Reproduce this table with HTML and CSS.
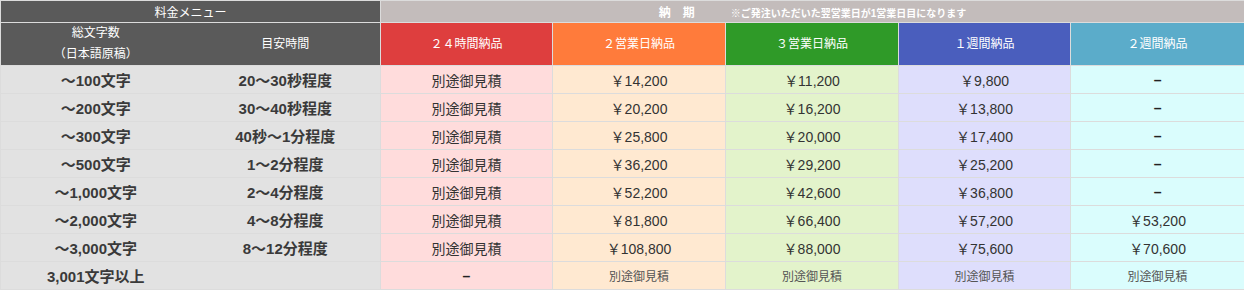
FILE: index.html
```html
<!DOCTYPE html>
<html lang="ja">
<head>
<meta charset="utf-8">
<title>料金メニュー</title>
<link rel="stylesheet" href="styles.css">
</head>
<body>
<table class="price">
  <colgroup>
    <col class="c-len"><col class="c-time">
    <col class="c-d1"><col class="c-d2"><col class="c-d3"><col class="c-d4"><col class="c-d5">
  </colgroup>
  <thead>
    <tr class="h1">
      <th colspan="2" class="dark">料金メニュー</th>
      <th colspan="5" class="grey"><span class="nouki">納　期</span><span class="note">※ご発注いただいた翌営業日が1営業日目になります</span></th>
    </tr>
    <tr class="h2">
      <th class="dark l">総文字数<br>（日本語原稿）</th>
      <th class="dark r">目安時間</th>
      <th class="red">２４時間納品</th>
      <th class="orange">２営業日納品</th>
      <th class="green">３営業日納品</th>
      <th class="blue">１週間納品</th>
      <th class="cyan">２週間納品</th>
    </tr>
  </thead>
  <tbody>
    <tr><td class="l">～100文字</td><td class="r">20～30秒程度</td><td class="p1">別途御見積</td><td class="p2">￥14,200</td><td class="p3">￥11,200</td><td class="p4">￥9,800</td><td class="p5"><span class="dash">–</span></td></tr>
    <tr><td class="l">～200文字</td><td class="r">30～40秒程度</td><td class="p1">別途御見積</td><td class="p2">￥20,200</td><td class="p3">￥16,200</td><td class="p4">￥13,800</td><td class="p5"><span class="dash">–</span></td></tr>
    <tr><td class="l">～300文字</td><td class="r">40秒～1分程度</td><td class="p1">別途御見積</td><td class="p2">￥25,800</td><td class="p3">￥20,000</td><td class="p4">￥17,400</td><td class="p5"><span class="dash">–</span></td></tr>
    <tr><td class="l">～500文字</td><td class="r">1～2分程度</td><td class="p1">別途御見積</td><td class="p2">￥36,200</td><td class="p3">￥29,200</td><td class="p4">￥25,200</td><td class="p5"><span class="dash">–</span></td></tr>
    <tr><td class="l">～1,000文字</td><td class="r">2～4分程度</td><td class="p1">別途御見積</td><td class="p2">￥52,200</td><td class="p3">￥42,600</td><td class="p4">￥36,800</td><td class="p5"><span class="dash">–</span></td></tr>
    <tr><td class="l">～2,000文字</td><td class="r">4～8分程度</td><td class="p1">別途御見積</td><td class="p2">￥81,800</td><td class="p3">￥66,400</td><td class="p4">￥57,200</td><td class="p5">￥53,200</td></tr>
    <tr><td class="l">～3,000文字</td><td class="r">8～12分程度</td><td class="p1">別途御見積</td><td class="p2">￥108,800</td><td class="p3">￥88,000</td><td class="p4">￥75,600</td><td class="p5">￥70,600</td></tr>
    <tr class="last"><td class="l">3,001文字以上</td><td class="r"></td><td class="p1"><span class="dash">–</span></td><td class="p2 sm">別途御見積</td><td class="p3 sm">別途御見積</td><td class="p4 sm">別途御見積</td><td class="p5 sm">別途御見積</td></tr>
  </tbody>
</table>
</body>
</html>
```
FILE: styles.css
```css
html, body {
  margin: 0;
  padding: 0;
  background: #ffffff;
}
body {
  font-family: "Liberation Sans", "Noto Sans CJK JP", sans-serif;
  color: #333333;
}
.price {
  width: 1244px;
  table-layout: fixed;
  border-collapse: collapse;
}
.c-len { width: 190px; }
.c-time { width: 190px; }
.c-d1 { width: 172px; }
.c-d2 { width: 173px; }
.c-d3 { width: 173px; }
.c-d4 { width: 172px; }
.c-d5 { width: 174px; }

.price th, .price td {
  border: 1px solid #dcdcdc;
  padding: 0;
  text-align: center;
  vertical-align: middle;
}
.price th {
  color: #ffffff;
  font-weight: normal;
  font-size: 12px;
}
.h1 th { height: 21px; }
.h2 th { height: 41px; line-height: 21px; }
.price td { height: 27px; font-size: 14px; }

.price .l { border-right: hidden; }
.price .r { border-left: hidden; }

.dark { background: #5a5a5a; }
.grey { background: #c3bcbb; }
.nouki { font-weight: bold; margin-right: 36px; }
.note { font-size: 10px; font-weight: bold; }
.red { background: #de3e3e; }
.orange { background: #ff7b3b; }
.green { background: #2f9a28; }
.blue { background: #4a5ebd; }
.cyan { background: #5bacca; }

.price td.l, .price td.r {
  background: #e2e2e2;
  font-weight: bold;
  font-size: 15px;
  color: #3a3a3a;
}
.p1 { background: #ffdcdc; }
.p2 { background: #ffe9d1; }
.p3 { background: #e3f3cb; }
.p4 { background: #dedefc; }
.p5 { background: #dafdfd; }
.price td.sm { font-size: 12px; color: #555555; }
.dash { font-weight: bold; color: #222222; }
```
